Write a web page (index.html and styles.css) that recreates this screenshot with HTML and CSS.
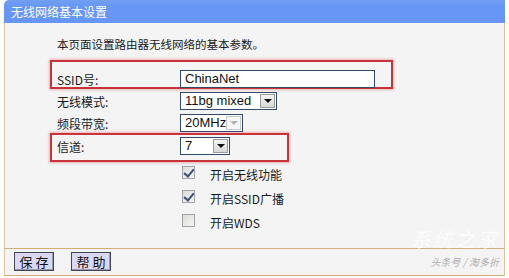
FILE: index.html
```html
<!DOCTYPE html>
<html lang="zh-CN">
  <head>
    <meta charset="UTF-8" />
    <title>无线网络基本设置</title>
    <link rel="stylesheet" href="styles.css">
  </head>
  <body>
    <div class="panel">
      <div class="title">无线网络基本设置</div>
      <div class="content">
        <p class="intro">本页面设置路由器无线网络的基本参数。</p>

        <!-- SSID, highlighted -->
        <div class="mark mark-ssid">
          <div class="row">
            <span class="label">SSID号:</span>
            <span class="textbox">ChinaNet</span>
          </div>
        </div>

        <div class="row row-gap">
          <span class="label">无线模式:</span>
          <span class="select select-mode">
            <span class="value">11bg mixed</span>
            <span class="arrow"></span>
          </span>
        </div>

        <div class="row row-gap">
          <span class="label">频段带宽:</span>
          <span class="select select-band disabled">
            <span class="value">20MHz</span>
            <span class="arrow"></span>
          </span>
        </div>

        <!-- channel, highlighted -->
        <div class="mark mark-channel">
          <div class="row">
            <span class="label">信道:</span>
            <span class="select select-channel">
              <span class="value">7</span>
              <span class="arrow"></span>
            </span>
          </div>
        </div>

        <ul class="checks">
          <li><span class="check on"></span>开启无线功能</li>
          <li><span class="check on"></span>开启SSID广播</li>
          <li><span class="check"></span>开启WDS</li>
        </ul>
      </div>
      <div class="footer">
        <button class="btn">保 存</button>
        <button class="btn">帮 助</button>
      </div>
      <div class="watermark">
        <span class="wm-logo">系统之家</span>
        <span class="wm-credit">头条号 / 淘多折</span>
      </div>
    </div>
  </body>
</html>
```

FILE: styles.css
```css
* {
  margin: 0;
  padding: 0;
  box-sizing: border-box;
}

body {
  background: #ffffff;
  font-family: "Noto Sans CJK SC", "Liberation Sans", sans-serif;
  font-size: 12px;
  color: #1a1a1a;
}

.panel {
  position: relative;
  margin-left: 4px;
  width: 501px;
  height: 276px;
}

.title {
  height: 23px;
  line-height: 23px;
  padding-left: 7px;
  background: linear-gradient(#729ff0, #6696f6 30%, #6596f8);
  border-top-left-radius: 5px;
  color: #ffffff;
  font-size: 12px;
}

.content {
  height: 226px;
  padding-left: 52px;
  padding-top: 12px;
  background: #f4f4f4;
  border-left: 1px solid #dcc19c;
  border-right: 1px solid #dcc19c;
  border-bottom: 1px solid #d3ad7c;
}

.intro {
  font-size: 11.5px;
  line-height: 18px;
  height: 18px;
}

.row {
  display: flex;
  align-items: center;
  height: 18px;
}

.row-gap {
  margin-top: 4px;
}

.label {
  width: 123px;
  flex-shrink: 0;
}

.mark {
  margin-left: -7px;
  padding-left: 5px;
  border: 2px solid #c9343a;
  box-shadow: 0 0 2px 1px rgba(236, 150, 150, 0.7);
}

.mark-ssid {
  width: 343px;
  height: 29px;
  margin-top: 7px;
  padding-top: 8px;
}

.mark-ssid + .row-gap {
  margin-top: 3px;
}

.mark-channel {
  width: 239px;
  height: 29px;
  margin-top: 1px;
  padding-top: 2px;
}

.textbox {
  display: block;
  width: 195px;
  height: 18px;
  line-height: 16px;
  padding-left: 4px;
  background: #ffffff;
  border: 1px solid #2f4a6a;
  font-family: "Liberation Sans", Arial, sans-serif;
  font-size: 13px;
  color: #111;
}

.select {
  display: flex;
  align-items: center;
  height: 18px;
  background: #ffffff;
  border: 1px solid #2f4a6a;
  font-family: "Liberation Sans", Arial, sans-serif;
  font-size: 13px;
  color: #111;
}

.select .value {
  flex: 1;
  padding-left: 4px;
  line-height: 16px;
}

.select .arrow {
  position: relative;
  width: 15px;
  height: 14px;
  margin-right: 1px;
  background: linear-gradient(#f4f4f4, #d8d8d8);
  border: 1px solid #9a9a9a;
}

.select .arrow::after {
  content: "";
  position: absolute;
  left: 3px;
  top: 4px;
  border-left: 4px solid transparent;
  border-right: 4px solid transparent;
  border-top: 4px solid #111;
}

.select-mode {
  width: 97px;
}

.select-band {
  width: 63px;
}

.select-channel {
  width: 50px;
}

.select.disabled .arrow {
  background: #f6f6f6;
  border-color: #c8c8c8;
}

.select.disabled .arrow::after {
  border-top-color: #b4b4b4;
}

.checks {
  list-style: none;
  margin-left: 125px;
}

.checks li {
  display: flex;
  align-items: center;
  height: 24px;
}

.check {
  position: relative;
  width: 13px;
  height: 13px;
  margin-right: 15px;
  margin-top: -4px;
  background: linear-gradient(135deg, #dcdcd8, #f6f6f4);
  border: 1px solid #a4a4a4;
}

.check.on::after {
  content: "";
  position: absolute;
  left: 3px;
  top: 0px;
  width: 4px;
  height: 8px;
  border-right: 2px solid #3c4e78;
  border-bottom: 2px solid #3c4e78;
  transform: rotate(40deg);
}

.footer {
  display: flex;
  gap: 17px;
  height: 27px;
  padding-left: 9px;
  padding-top: 3px;
  background: #f4f4f4;
  border-left: 1px solid #dcc19c;
  border-right: 1px solid #dcc19c;
  border-bottom: 1px solid #d3ad7c;
}

.btn {
  width: 40px;
  height: 19px;
  background: #d9d9f4;
  border: 1px solid #45455a;
  box-shadow: inset -1px -1px 0 #9a9ab4;
  font-family: "Noto Sans CJK SC", sans-serif;
  font-size: 13px;
  line-height: 16px;
  color: #111;
}

.watermark {
  position: absolute;
  right: 6px;
  bottom: 8px;
  text-align: right;
  pointer-events: none;
}

.wm-logo {
  display: block;
  margin-bottom: 6px;
  font-size: 20px;
  font-style: italic;
  color: rgba(255, 255, 255, 0.75);
  letter-spacing: 2px;
  line-height: 22px;
}

.wm-credit {
  display: block;
  font-size: 10px;
  font-style: italic;
  color: #b0b0b0;
  line-height: 12px;
}
```
